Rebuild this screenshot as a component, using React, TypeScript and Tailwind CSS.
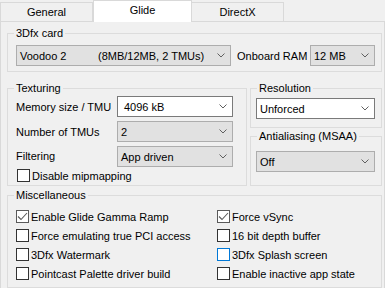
import React from "react";

/* ─── Chevron used by every combo ─── */
function Chevron() {
  return (
    <svg width="8" height="5" viewBox="0 0 8 5" className="shrink-0">
      <polyline points="0.5,0.5 4,4 7.5,0.5" fill="none" stroke="#606060" strokeWidth="1" />
    </svg>
  );
}

/* ─── Combo box ─── */
function Combo({
  children,
  white = false,
  className = "",
}: {
  children: React.ReactNode;
  white?: boolean;
  className?: string;
}) {
  return (
    <div
      className={`h-[21px] flex items-center justify-between pr-[5px] border ${
        white ? "bg-white border-[#7a7a7a] pl-[6px]" : "bg-[#e1e1e1] border-[#adadad] pl-[3px]"
      } ${className}`}
    >
      <div className="flex items-center whitespace-nowrap">{children}</div>
      <Chevron />
    </div>
  );
}

/* ─── Checkbox ─── */
function Check({ label, checked = false, focus = false }: { label: string; checked?: boolean; focus?: boolean }) {
  return (
    <div className="flex items-center h-[19px]">
      <div
        className={`w-[13px] h-[13px] bg-white border shrink-0 flex items-center justify-center ${
          focus ? "border-[#0078d7]" : checked ? "border-[#5a5a5a]" : "border-[#333333]"
        }`}
      >
        {checked && (
          <svg width="11" height="11" viewBox="0 0 11 11">
            <polyline points="1,5.5 4,8.5 10,2" fill="none" stroke="#5a5a5a" strokeWidth="1.1" />
          </svg>
        )}
      </div>
      <span className="ml-[2px] whitespace-nowrap">{label}</span>
    </div>
  );
}

/* ─── Group box ─── */
function Group({
  title,
  className = "",
  children,
}: {
  title: string;
  className?: string;
  children: React.ReactNode;
}) {
  return (
    <fieldset className={`border border-[#dcdcdc] ${className}`}>
      <legend className="ml-[6px] px-[2px] leading-[16px]">{title}</legend>
      {children}
    </fieldset>
  );
}

export default function App() {
  return (
    <div className="w-[385px] h-[288px] bg-[#f0f0f0] text-[11px] leading-[16px] text-black overflow-hidden flex flex-col font-['Liberation_Sans',Arial,sans-serif]">
      {/* Tabs */}
      <div className="h-[21px] flex items-end shrink-0">
        <div className="w-[93px] h-[19px] border border-b-0 border-[#d9d9d9] flex items-center justify-center">
          General
        </div>
        <div className="w-[99px] h-[22px] -mb-px bg-white border border-b-0 border-[#d9d9d9] flex items-center justify-center pb-[3px] relative z-10">
          Glide
        </div>
        <div className="w-[92px] h-[19px] border border-b-0 border-l-0 border-[#d9d9d9] flex items-center justify-center">
          DirectX
        </div>
      </div>

      {/* Page */}
      <div className="flex-1 border border-b-0 border-[#d9d9d9] pl-[6px] pr-[2px] pt-[3px] flex flex-col">
        <Group title="3Dfx card" className="h-[47px]">
          <div className="flex items-center pl-[8px] pr-[6px] pt-[4px]">
            <Combo className="w-[215px]">
              <span className="w-[78px]">Voodoo 2</span>
              <span>(8MB/12MB, 2 TMUs)</span>
            </Combo>
            <span className="ml-[6px] w-[73px] whitespace-nowrap">Onboard RAM</span>
            <Combo className="w-[65px]">12 MB</Combo>
          </div>
        </Group>

        <div className="flex gap-[3px] mt-[8px]">
          <Group title="Texturing" className="w-[240px] h-[106px]">
            <div className="pl-[8px] grid grid-cols-[101px_116px] gap-y-[4px] items-center">
              <span className="whitespace-nowrap">Memory size / TMU</span>
              <Combo white>4096 kB</Combo>
              <span className="whitespace-nowrap">Number of TMUs</span>
              <Combo>2</Combo>
              <span className="whitespace-nowrap -mt-[2px]">Filtering</span>
              <Combo>App driven</Combo>
            </div>
            <div className="pl-[9px] mt-[-1px]">
              <Check label="Disable mipmapping" />
            </div>
          </Group>

          <div className="w-[132px] flex flex-col">
            <Group title="Resolution" className="h-[48px]">
              <div className="pl-[5px] pr-[6px] mt-[2px]">
                <Combo white className="!pl-[3px]">Unforced</Combo>
              </div>
            </Group>
            <Group title="Antialiasing (MSAA)" className="h-[58px]">
              <div className="pl-[5px] pr-[6px] mt-[7px]">
                <Combo>Off</Combo>
              </div>
            </Group>
          </div>
        </div>

        <Group title="Miscellaneous" className="h-[101px] mt-px">
          <div className="grid grid-cols-[201px_1fr] pl-[8px] pt-[4px]">
            <Check label="Enable Glide Gamma Ramp" checked />
            <Check label="Force vSync" checked />
            <Check label="Force emulating true PCI access" />
            <Check label="16 bit depth buffer" />
            <Check label="3Dfx Watermark" />
            <Check label="3Dfx Splash screen" focus />
            <Check label="Pointcast Palette driver build" />
            <Check label="Enable inactive app state" />
          </div>
        </Group>
      </div>
    </div>
  );
}
